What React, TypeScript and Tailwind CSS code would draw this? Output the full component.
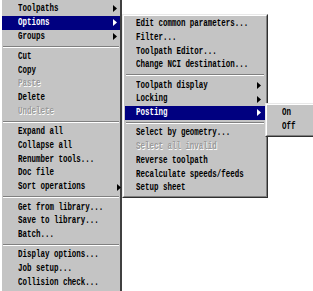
import React from "react"

type Entry = { label: string; arrow?: boolean; active?: boolean; disabled?: boolean } | "sep"

const mainItems: Entry[] = [
  { label: "Toolpaths", arrow: true },
  { label: "Options", arrow: true, active: true },
  { label: "Groups", arrow: true },
  "sep",
  { label: "Cut" },
  { label: "Copy" },
  { label: "Paste", disabled: true },
  { label: "Delete" },
  { label: "Undelete", disabled: true },
  "sep",
  { label: "Expand all" },
  { label: "Collapse all" },
  { label: "Renumber tools..." },
  { label: "Doc file" },
  { label: "Sort operations", arrow: true },
  "sep",
  { label: "Get from library..." },
  { label: "Save to library..." },
  { label: "Batch..." },
  "sep",
  { label: "Display options..." },
  { label: "Job setup..." },
  { label: "Collision check..." },
]

const optionItems: Entry[] = [
  { label: "Edit common parameters..." },
  { label: "Filter..." },
  { label: "Toolpath Editor..." },
  { label: "Change NCI destination..." },
  "sep",
  { label: "Toolpath display", arrow: true },
  { label: "Locking", arrow: true },
  { label: "Posting", arrow: true, active: true },
  "sep",
  { label: "Select by geometry..." },
  { label: "Select all invalid", disabled: true },
  { label: "Reverse toolpath" },
  { label: "Recalculate speeds/feeds" },
  { label: "Setup sheet" },
]

const postingItems: Entry[] = [{ label: "On" }, { label: "Off" }]

function Arrow({ white }: { white?: boolean }) {
  return (
    <svg width="4" height="7" viewBox="0 0 4 7" className="shrink-0">
      <path d="M0 0 L4 3.5 L0 7 Z" fill={white ? "#ffffff" : "#000000"} />
    </svg>
  )
}

function MenuRows({ items, textPad, arrowPad }: { items: Entry[]; textPad: string; arrowPad: string }) {
  return (
    <>
      {items.map((item, index) => {
        if (item === "sep") {
          return (
            <div key={index} className="h-[6.6px] flex flex-col justify-center px-[1px]">
              <div className="h-px bg-[#808080]" />
              <div className="h-px bg-white" />
            </div>
          )
        }
        return (
          <div
            key={index}
            className={`h-[13.75px] flex items-center justify-between ${textPad} ${arrowPad} ${item.active ? "bg-[#000080] text-white" : item.disabled ? "text-[#9a9a9a] [text-shadow:1px_1px_0_#ffffff]" : "text-black"}`}
          >
            <span className="inline-block whitespace-nowrap origin-left scale-x-[0.68] font-bold text-[11px] leading-[13.75px] font-['Liberation_Mono',monospace]">
              {item.label}
            </span>
            {item.arrow && <Arrow white={item.active} />}
          </div>
        )
      })}
    </>
  )
}

export default function App() {
  return (
    <div className="relative w-[313px] h-[291px] overflow-hidden bg-white">
      {/* main context menu */}
      <div className="w-[122px] h-[320px] bg-[#c4c4c4] border-l-2 border-r-2 border-l-white border-r-[#404040] pt-[2px]">
        <MenuRows items={mainItems} textPad="pl-[16px]" arrowPad="pr-[3px]" />
      </div>

      {/* Options submenu */}
      <div className="absolute left-[122px] top-[14px] w-[146px] bg-[#c4c4c4] border border-t-[#e8e8e8] border-l-[#e8e8e8] border-r-[#303030] border-b-[#303030]">
        <div className="border border-t-white border-l-white border-r-[#808080] border-b-[#808080] py-[1px] px-[1px]">
          <MenuRows items={optionItems} textPad="pl-[11px]" arrowPad="pr-[4px]" />
        </div>
      </div>

      {/* Posting submenu */}
      <div className="absolute left-[265px] top-[103px] w-[60px] bg-[#c4c4c4] border border-t-[#e8e8e8] border-l-[#e8e8e8] border-r-[#303030] border-b-[#303030]">
        <div className="border border-t-white border-l-white border-r-[#808080] border-b-[#808080] py-[1px] px-[1px]">
          <MenuRows items={postingItems} textPad="pl-[14px]" arrowPad="pr-[4px]" />
        </div>
      </div>
    </div>
  )
}
